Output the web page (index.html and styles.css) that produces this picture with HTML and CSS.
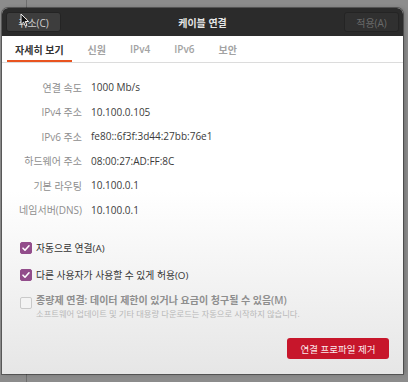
FILE: index.html
```html
<!DOCTYPE html>
<html lang="ko">
<head>
    <meta charset="UTF-8">
    <meta name="viewport" content="width=device-width, initial-scale=1.0">
    <title>케이블 연결</title>
    <link rel="stylesheet" href="styles.css">
</head>
<body>
    <div class="dialog">
        <div class="titlebar">
            <button class="hbtn cancel">취소(C)</button>
            <div class="title">케이블 연결</div>
            <button class="hbtn apply">적용(A)</button>
        </div>
        <div class="tabs">
            <span class="tab active">자세히 보기</span>
            <span class="tab">신원</span>
            <span class="tab">IPv4</span>
            <span class="tab">IPv6</span>
            <span class="tab">보안</span>
        </div>
        <div class="content">
            <div class="info">
                <span class="label">연결 속도</span><span class="value">1000 Mb/s</span>
                <span class="label">IPv4 주소</span><span class="value">10.100.0.105</span>
                <span class="label">IPv6 주소</span><span class="value">fe80::6f3f:3d44:27bb:76e1</span>
                <span class="label">하드웨어 주소</span><span class="value">08:00:27:AD:FF:8C</span>
                <span class="label">기본 라우팅</span><span class="value">10.100.0.1</span>
                <span class="label">네임서버(DNS)</span><span class="value">10.100.0.1</span>
            </div>
            <div class="checks">
                <div class="check">
                    <span class="box checked"><svg width="10" height="10" viewBox="0 0 10 10"><path d="M2 5.2l2 2 4-4.4" fill="none" stroke="#fff" stroke-width="1.6" stroke-linecap="round" stroke-linejoin="round"/></svg></span>
                    <span>자동으로 연결(A)</span>
                </div>
                <div class="check">
                    <span class="box checked"><svg width="10" height="10" viewBox="0 0 10 10"><path d="M2 5.2l2 2 4-4.4" fill="none" stroke="#fff" stroke-width="1.6" stroke-linecap="round" stroke-linejoin="round"/></svg></span>
                    <span>다른 사용자가 사용할 수 있게 허용(O)</span>
                </div>
                <div class="check metered">
                    <span class="box"></span>
                    <div>
                        <div class="metered-title">종량제 연결: 데이터 제한이 있거나 요금이 청구될 수 있음(M)</div>
                        <div class="metered-sub">소프트웨어 업데이트 및 기타 대용량 다운로드는 자동으로 시작하지 않습니다.</div>
                    </div>
                </div>
            </div>
            <div class="actions">
                <button class="remove">연결 프로파일 제거</button>
            </div>
        </div>
        <svg class="cursor" width="9" height="14" viewBox="0 0 9 14"><path d="M1 1v10.5l2.6-2.4 1.8 4 1.6-.7-1.8-3.9h3.4z" fill="#111" stroke="#eee" stroke-width="1"/></svg>
    </div>
</body>
</html>
```

FILE: styles.css
```css
body {
    margin: 0;
    height: 382px;
    overflow: hidden;
    font-family: "Open Sans", "Noto Sans CJK KR", sans-serif;
    background: linear-gradient(to right, transparent 26px, #6e6e6e 26px, #6e6e6e 27px, transparent 27px), #8c8c8c;
}
.dialog {
    position: relative;
    margin: 8px 0 0 2px;
    width: 401px;
    height: 366px;
    display: flex;
    flex-direction: column;
    border-radius: 6px 6px 0 0;
    background: linear-gradient(#fff 50%, #e6e6e6);
    box-shadow: 0 0 0 1px rgba(0, 0, 0, 0.35), 2px 0 4px rgba(0, 0, 0, 0.2);
}
.titlebar {
    height: 28px;
    display: grid;
    grid-template-columns: 1fr auto 1fr;
    align-items: center;
    padding: 0 4px;
    background: #2b2b2b;
    border-radius: 6px 6px 0 0;
}
.hbtn {
    height: 20px;
    width: 55px;
    border: 1px solid #242424;
    border-radius: 3px;
    font-family: "Open Sans", "Noto Sans CJK KR", sans-serif;
    font-size: 10px;
    padding: 0;
}
.cancel {
    justify-self: start;
    background: #3d3d3d;
    color: #cfcfcf;
}
.apply {
    justify-self: end;
    background: #303030;
    color: #6a6a6a;
}
.title {
    color: #e6e6e6;
    font-size: 10px;
    font-weight: bold;
}
.tabs {
    height: 26px;
    display: flex;
    gap: 8px;
    padding-left: 5px;
    border-bottom: 1px solid #dcdcdc;
}
.tab {
    padding: 0 8px;
    display: flex;
    align-items: center;
    font-size: 10px;
    font-weight: 600;
    color: #a3a3a3;
    border-bottom: 2px solid transparent;
    padding-top: 2px;
}
.tab.active {
    color: #333;
    font-weight: bold;
    border-bottom-color: #e95420;
}
.content {
    flex: 1;
    display: flex;
    flex-direction: column;
}
.info {
    display: grid;
    grid-template-columns: 80px auto;
    grid-auto-rows: 24.5px;
    column-gap: 9px;
    align-items: center;
    padding-top: 12px;
}
.label {
    text-align: right;
    font-size: 10px;
    color: #8e8e8e;
}
.value {
    font-size: 10px;
    color: #3b3b3b;
}
.checks {
    display: flex;
    flex-direction: column;
    gap: 7px;
    padding: 16px 0 0 18px;
}
.check {
    display: flex;
    align-items: center;
    gap: 4px;
    height: 20px;
    font-size: 9.8px;
    color: #333;
}
.box {
    width: 12px;
    height: 12px;
    box-sizing: border-box;
    border-radius: 2px;
    display: flex;
    align-items: center;
    justify-content: center;
    border: 1px solid #c9c9c9;
    background: #f3f3f3;
}
.box.checked {
    background: #924d8b;
    border-color: #924d8b;
}
.metered {
    align-items: flex-start;
    height: auto;
}
.metered .box {
    margin-top: 5px;
}
.metered-title {
    font-weight: 600;
    color: #8e8e8e;
    font-size: 10px;
}
.metered-sub {
    font-size: 8.3px;
    color: #b8b8b8;
}
.actions {
    display: flex;
    justify-content: flex-end;
    padding: 19px 14px 0 0;
}
.remove {
    width: 102px;
    height: 21px;
    border: none;
    border-radius: 3px;
    background: #c7162b;
    color: #fbe9eb;
    font-family: "Open Sans", "Noto Sans CJK KR", sans-serif;
    font-size: 9.5px;
    padding: 0;
}
.cursor {
    position: absolute;
    left: 18px;
    top: 5px;
}
```
